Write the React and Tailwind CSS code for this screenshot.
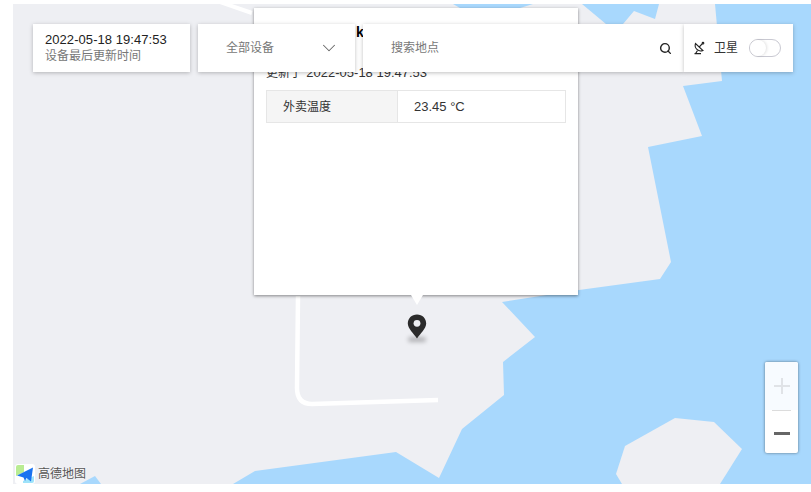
import React from "react";
import { Search, ChevronDown } from "lucide-react";

const LAND = "#eeeff3";
const WATER = "#a8d8fd";

const MapBackground = () => (
  <svg className="absolute inset-0 w-full h-full" viewBox="13 4 798 480">
    <rect x="13" y="4" width="798" height="480" fill={LAND} />
    <polygon fill={WATER} points="453,4 533,4 520,8 460,8" />
    <polygon fill={WATER} points="582,4 606,24 600,34 618,34 623,24 634,11 655,19 659,4" />
    <polygon
      fill={WATER}
      points="715,4 722,81 683,86 702,136 648,147 671,262 660,279 579,290 502,302 535,337 503,362 504,395 462,429 439,478 396,452 255,471 233,484 811,484 811,4"
    />
    <polygon fill={WATER} points="80,484 95,476 101,484" />
    <polygon fill={LAND} points="616,474 625,446 675,418 714,422 742,449 720,484 622,484" />
    <path d="M220 2 L252 13" stroke="#fff" strokeWidth="4" fill="none" />
    <path
      d="M298 296 L297 388 Q297 404 312 404 L438 400"
      stroke="#fff"
      strokeWidth="4.5"
      fill="none"
    />
  </svg>
);

const Marker = () => (
  <div className="absolute left-[394px] top-[310px] w-5 h-8">
    <div className="absolute left-[1px] top-[23px] w-[18px] h-[5px] rounded-full bg-black/25 blur-[2px]" />
    <svg className="absolute left-0 top-0" width="20" height="29" viewBox="0 0 20 29">
      <path
        d="M10 0.5 C4.6 0.5 0.8 4.4 0.8 9.6 C0.8 14.5 6.5 19.5 10 24.5 C13.5 19.5 19.2 14.5 19.2 9.6 C19.2 4.4 15.4 0.5 10 0.5 Z"
        fill="#2b2b2b"
      />
      <circle cx="10" cy="9.3" r="3.4" fill="#eeeff3" />
    </svg>
  </div>
);

const InfoWindow = () => (
  <div className="absolute left-[241px] top-1 w-[324px] h-[287px] bg-white shadow-[0_1px_3px_rgba(0,0,0,0.45)]">
    <div className="pl-[102px] pt-[15px] h-[58px] text-[14px] leading-[18px] font-bold text-black">k</div>
    <div className="pl-3 text-[12px] leading-[14px] text-[#333]">
      更新于 <span className="ml-px text-[13px]">2022-05-18 19:47:53</span>
    </div>
    <div className="ml-3 mt-[10px] w-[300px] h-[33px] flex border border-[#e6e6e6] text-[12px] text-[#333]">
      <div className="w-[131px] bg-[#f5f5f5] border-r border-[#e6e6e6] pl-4 flex items-center">外卖温度</div>
      <div className="flex-1 pl-4 flex items-center text-[13px]">23.45 °C</div>
    </div>
    <div className="absolute left-[157px] top-[287px] w-0 h-0 border-l-[6px] border-r-[6px] border-t-[10px] border-l-transparent border-r-transparent border-t-white" />
  </div>
);

const SatelliteIcon = () => (
  <svg width="14" height="14" viewBox="0 0 14 14" fill="none" stroke="#222" strokeWidth="1.1">
    <path d="M3.5 2.5 A5.6 5.6 0 0 0 11 9.5 Z" />
    <path d="M7.2 6 L10.4 2.6" />
    <circle cx="11" cy="2.2" r="0.8" />
    <path d="M5.5 9.5 L3.6 12.6 M2.5 12.6 H9" />
  </svg>
);

const Toolbar = () => (
  <div className="absolute left-5 top-5 flex h-12 text-[12px]">
    <div className="w-[157px] bg-white shadow-[0_1px_4px_rgba(0,0,0,0.25)] pl-3 flex flex-col justify-center">
      <div className="text-[13px] leading-4 text-[#222] tracking-[0.06px]">2022-05-18 19:47:53</div>
      <div className="leading-4 text-[#777]">设备最后更新时间</div>
    </div>
    <div className="ml-2 w-[157px] bg-white shadow-[0_1px_4px_rgba(0,0,0,0.25)] pl-7 pr-[15px] flex items-center justify-between text-[#777]">
      <span>全部设备</span>
      <ChevronDown size={22} strokeWidth={1.1} className="text-[#666]" />
    </div>
    <div className="ml-2 w-[321px] bg-white shadow-[0_1px_4px_rgba(0,0,0,0.25)] pl-7 pr-[12px] flex items-center justify-between text-[#777]">
      <span>搜索地点</span>
      <Search size={13} strokeWidth={2.6} className="text-[#222]" />
    </div>
    <div className="w-[109px] bg-white shadow-[0_1px_4px_rgba(0,0,0,0.25)] pl-2 flex items-center text-[#333]">
      <SatelliteIcon />
      <span className="ml-2">卫星</span>
      <div className="ml-[11px] w-8 h-[18px] rounded-full border border-[#c9c9d2] bg-white flex items-center">
        <div className="w-4 h-4 rounded-full bg-white shadow-[1px_0_3px_rgba(0,0,0,0.12)]" />
      </div>
    </div>
  </div>
);

const ZoomControl = () => (
  <div className="absolute left-[752px] top-[358px] w-[33px] h-[91px] rounded-[2px] bg-white shadow-[0_0_3px_rgba(0,0,0,0.5)] flex flex-col items-center">
    <div className="w-full h-[48px] bg-[#f7fbff] rounded-t-[2px] flex items-center justify-center">
      <svg width="16" height="16" viewBox="0 0 16 16">
        <path d="M8 0 V16 M0 8 H16" stroke="#e0e3e7" strokeWidth="2" />
      </svg>
    </div>
    <div className="w-[19px] h-px bg-[#dcdcdc]" />
    <div className="flex-1 pt-0.5 flex items-center justify-center">
      <div className="w-4 h-[3px] bg-[#666]" />
    </div>
  </div>
);

const Logo = () => (
  <div className="absolute left-0.5 top-[460px] h-5 flex items-center">
    <svg width="20" height="20" viewBox="0 0 20 20">
      <rect x="0" y="0" width="20" height="20" rx="3" fill="#fff" />
      <path d="M1 3 Q1 1 3 1 H9 V8 L1 12 Z" fill="#b9ec93" />
      <path d="M8 17 L19 12 V17 Q19 19 17 19 H8 Z" fill="#9fe3fa" />
      <path d="M2 11.5 L18 3.5 L16 17.5 L11.5 14 L10 17 L8.5 13.5 Z" fill="#1a73f0" />
    </svg>
    <span className="ml-[3px] text-[12px] text-[#555] [text-shadow:0_0_2px_#fff]">高德地图</span>
  </div>
);

export default function App() {
  return (
    <div className="w-[811px] h-[492px] bg-white overflow-hidden pl-[13px] pt-1 [font-family:'Liberation_Sans','Noto_Sans_CJK_SC',sans-serif]">
      <div className="relative w-[798px] h-[480px] overflow-hidden">
        <MapBackground />
        <Marker />
        <InfoWindow />
        <Toolbar />
        <ZoomControl />
        <Logo />
      </div>
    </div>
  );
}
